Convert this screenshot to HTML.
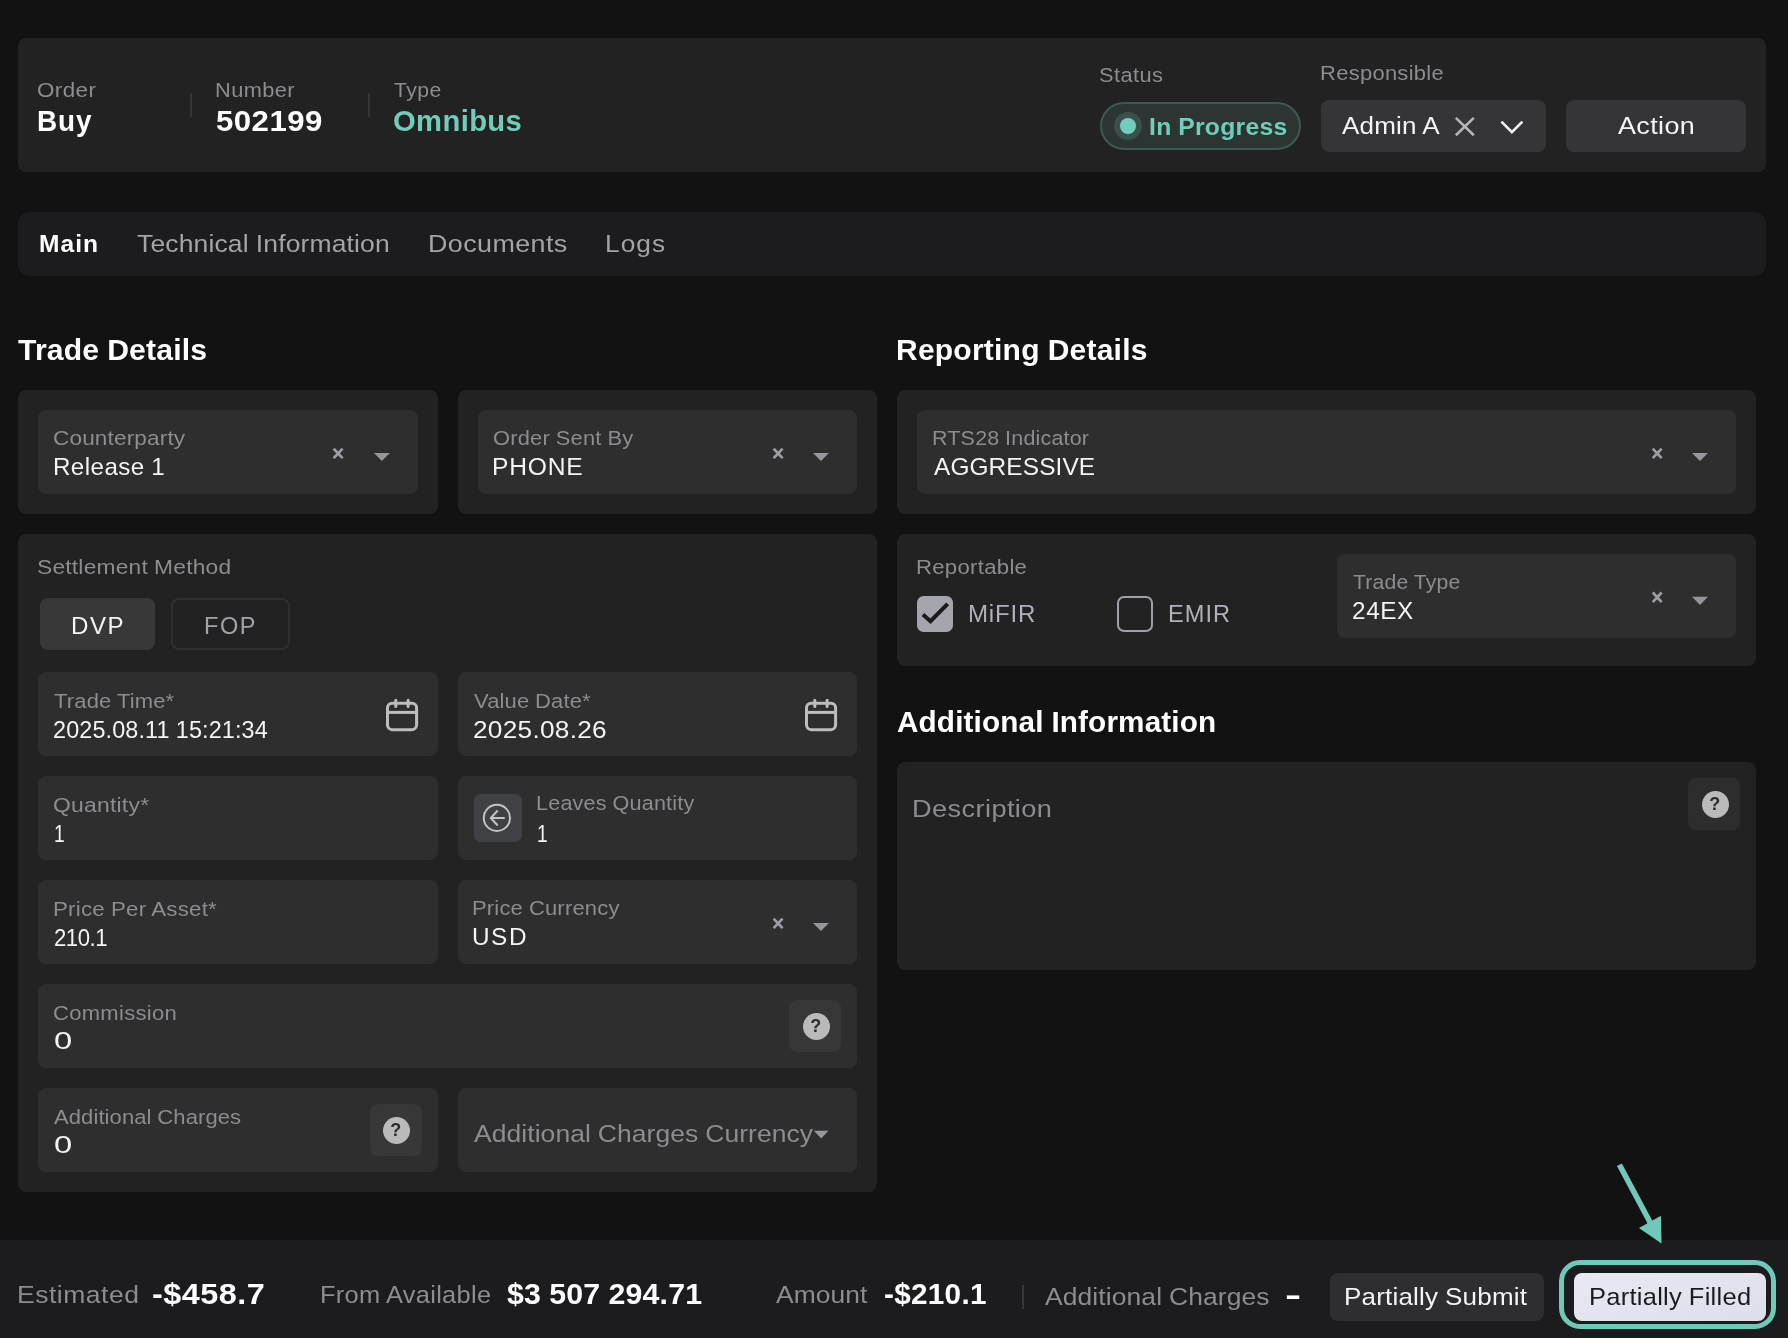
<!DOCTYPE html><html lang="en"><head><meta charset="utf-8"><title>Order 502199</title><style>
html,body{margin:0;padding:0;background:#121212}
body{width:1788px;height:1338px;position:relative;overflow:hidden;font-family:"Liberation Sans",sans-serif}
.b{position:absolute;box-sizing:border-box}
.c{background:#222222;border-radius:8px}
.f{background:#2e2e2e;border-radius:8px}
.tl{position:absolute;left:0;top:0;width:1788px;height:1338px;will-change:transform}
.t{position:absolute;white-space:pre;line-height:1;word-spacing:-0.02em;transform-origin:0 50%}
svg{position:absolute;overflow:visible}

</style></head><body>
<div class="b c" style="left:18px;top:38px;width:1748px;height:134px;"></div>
<div class="b " style="left:18px;top:212px;width:1748px;height:64px;background:#1c1c1e;border-radius:12px"></div>
<div class="b c" style="left:18px;top:390px;width:420px;height:124px;"></div>
<div class="b c" style="left:458px;top:390px;width:419px;height:124px;"></div>
<div class="b c" style="left:897px;top:390px;width:859px;height:124px;"></div>
<div class="b c" style="left:18px;top:534px;width:859px;height:658px;"></div>
<div class="b c" style="left:897px;top:534px;width:859px;height:132px;"></div>
<div class="b c" style="left:897px;top:762px;width:859px;height:207.5px;"></div>
<div class="b " style="left:0px;top:1240px;width:1788px;height:98px;background:#1c1c1e"></div>
<div class="b f" style="left:38px;top:410px;width:380px;height:84px;"></div>
<div class="b f" style="left:478px;top:410px;width:379px;height:84px;"></div>
<div class="b f" style="left:917px;top:410px;width:819px;height:84px;"></div>
<div class="b f" style="left:1337px;top:554px;width:399px;height:84px;"></div>
<div class="b f" style="left:38px;top:672px;width:400px;height:84px;"></div>
<div class="b f" style="left:458px;top:672px;width:399px;height:84px;"></div>
<div class="b f" style="left:38px;top:776px;width:400px;height:84px;"></div>
<div class="b f" style="left:458px;top:776px;width:399px;height:84px;"></div>
<div class="b f" style="left:38px;top:880px;width:400px;height:84px;"></div>
<div class="b f" style="left:458px;top:880px;width:399px;height:84px;"></div>
<div class="b f" style="left:38px;top:984px;width:819px;height:84px;"></div>
<div class="b f" style="left:38px;top:1088px;width:400px;height:84px;"></div>
<div class="b f" style="left:458px;top:1088px;width:399px;height:84px;"></div>
<div class="b " style="left:190px;top:93px;width:2px;height:24px;background:#343437"></div>
<div class="b " style="left:368px;top:93px;width:2px;height:24px;background:#343437"></div>
<div class="b " style="left:1022px;top:1285px;width:1.5px;height:23.5px;background:#38383b"></div>
<div class="b " style="left:1100px;top:102px;width:201px;height:48px;background:#2c3533;border:2px solid #3b5a54;border-radius:24px"></div>
<div class="b " style="left:1114px;top:112px;width:28px;height:28px;background:#3b4f4b;border-radius:50%"></div>
<div class="b " style="left:1119.9px;top:117.9px;width:16.2px;height:16.2px;background:#73cdbb;border-radius:50%"></div>
<div class="b " style="left:1321px;top:100px;width:225px;height:52px;background:#353538;border-radius:8px"></div>
<div class="b " style="left:1566px;top:100px;width:180px;height:52px;background:#353538;border-radius:8px"></div>
<div class="b " style="left:40px;top:598px;width:115px;height:52px;background:#383838;border-radius:8px"></div>
<div class="b " style="left:171px;top:598px;width:119px;height:52px;border:2px solid #2f2f31;border-radius:8px"></div>
<div class="b " style="left:474px;top:794px;width:48px;height:48px;background:#404144;border-radius:7px"></div>
<div class="b " style="left:789px;top:1000px;width:52px;height:52px;background:#373737;border-radius:8px"></div>
<div class="b " style="left:802.65px;top:1012.5px;width:27px;height:27px;background:#bababa;border-radius:50%"></div>
<div class="b " style="left:370px;top:1104px;width:52px;height:52px;background:#373737;border-radius:8px"></div>
<div class="b " style="left:382.5px;top:1116.6px;width:27px;height:27px;background:#bababa;border-radius:50%"></div>
<div class="b " style="left:1688px;top:778px;width:52px;height:52px;background:#2d2d2d;border-radius:8px"></div>
<div class="b " style="left:1701.6px;top:790.55px;width:27px;height:27px;background:#bababa;border-radius:50%"></div>
<div class="b " style="left:917px;top:596px;width:36px;height:36px;background:#a4a5ad;border-radius:6.5px"></div>
<svg style="left:917px;top:596px" width="36" height="36" viewBox="0 0 36 36"><path d="M5.9 18.5 L13.5 25.2 L30.7 7.9" fill="none" stroke="#1b1b1d" stroke-width="4" stroke-linejoin="miter"/></svg>
<div class="b " style="left:1117px;top:596px;width:36px;height:36px;border:2px solid #a0a0a8;border-radius:7px"></div>
<div class="b " style="left:1330px;top:1273px;width:214px;height:48.3px;background:#2e2e31;border-radius:8px"></div>
<div class="b " style="left:1573.8px;top:1273px;width:192.4px;height:48.3px;background:linear-gradient(160deg,#e9e9f3,#dedeea);border-radius:8px"></div>
<div class="b " style="left:1559.3px;top:1260px;width:216.7px;height:69.2px;border:5.5px solid #70c9b8;border-radius:21px"></div>
<svg style="left:0;top:0" width="1788" height="1338" viewBox="0 0 1788 1338"><path d="M1619.4 1164.7 L1651 1224" stroke="#70c9b8" stroke-width="5.6" fill="none"/><path d="M1661.5 1243.6 L1638.9 1228 L1661 1215.8 Z" fill="#70c9b8"/></svg>
<svg style="left:0;top:0" width="1" height="1"><path d="M333.65 448.55 L342.55 458.15 M342.55 448.55 L333.65 458.15" stroke="#9d9da4" stroke-width="2.7" fill="none"/></svg>
<svg style="left:0;top:0" width="1" height="1"><path d="M373.95 452.9 L389.84999999999997 452.9 L381.9 461.0 Z" fill="#96969c"/></svg>
<svg style="left:0;top:0" width="1" height="1"><path d="M773.65 448.55 L782.55 458.15 M782.55 448.55 L773.65 458.15" stroke="#9d9da4" stroke-width="2.7" fill="none"/></svg>
<svg style="left:0;top:0" width="1" height="1"><path d="M813.0 452.9 L828.9000000000001 452.9 L820.95 461.0 Z" fill="#96969c"/></svg>
<svg style="left:0;top:0" width="1" height="1"><path d="M1652.75 448.55 L1661.65 458.15 M1661.65 448.55 L1652.75 458.15" stroke="#9d9da4" stroke-width="2.7" fill="none"/></svg>
<svg style="left:0;top:0" width="1" height="1"><path d="M1692.05 452.9 L1707.95 452.9 L1700 461.0 Z" fill="#96969c"/></svg>
<svg style="left:0;top:0" width="1" height="1"><path d="M1652.75 592.50 L1661.65 602.10 M1661.65 592.50 L1652.75 602.10" stroke="#9d9da4" stroke-width="2.7" fill="none"/></svg>
<svg style="left:0;top:0" width="1" height="1"><path d="M1692.05 596.8 L1707.95 596.8 L1700 604.9 Z" fill="#96969c"/></svg>
<svg style="left:0;top:0" width="1" height="1"><path d="M773.65 918.55 L782.55 928.15 M782.55 918.55 L773.65 928.15" stroke="#9d9da4" stroke-width="2.7" fill="none"/></svg>
<svg style="left:0;top:0" width="1" height="1"><path d="M813.0 922.9 L828.9000000000001 922.9 L820.95 931.0 Z" fill="#96969c"/></svg>
<svg style="left:0;top:0" width="1" height="1"><path d="M813.9000000000001 1130.8 L828.5 1130.8 L821.2 1138.3999999999999 Z" fill="#96969c"/></svg>
<svg style="left:0;top:0" width="1" height="1"><path d="M1455.8 117.9 L1473.8 135.3 M1473.8 117.9 L1455.8 135.3" stroke="#b4b4b4" stroke-width="2.6" fill="none"/><path d="M1501.4 121.6 L1511.9 132.2 L1522.4 121.6" stroke="#f0f0f0" stroke-width="2.7" fill="none"/></svg>
<svg style="left:386px;top:698px" width="33" height="33" viewBox="0 0 33 33" fill="none" stroke="#bdbdbd" stroke-width="3"><rect x="1.5" y="5.15" width="29.1" height="26.5" rx="4.6"/><path d="M1.5 14.4 H30.6"/><path d="M9.8 2.3 V8.5 M22.1 2.3 V8.5" stroke-linecap="round"/></svg>
<svg style="left:804.9px;top:698px" width="33" height="33" viewBox="0 0 33 33" fill="none" stroke="#bdbdbd" stroke-width="3"><rect x="1.5" y="5.15" width="29.1" height="26.5" rx="4.6"/><path d="M1.5 14.4 H30.6"/><path d="M9.8 2.3 V8.5 M22.1 2.3 V8.5" stroke-linecap="round"/></svg>
<svg style="left:474px;top:794px" width="48" height="48" viewBox="0 0 48 48" fill="none" stroke="#c3c3c3" stroke-width="2" stroke-linejoin="miter"><circle cx="22.9" cy="23.9" r="13.1"/><path d="M30.7 24 H17 M23.7 16.5 L16.8 24 L23.7 31.5"/></svg>
<div class="tl">
<span class="t" style="left:810.35px;top:1016.75px;font-size:18px;font-weight:700;color:#2c2c2c">?</span>
<span class="t" style="left:390.20px;top:1120.85px;font-size:18px;font-weight:700;color:#2c2c2c">?</span>
<span class="t" style="left:1709.30px;top:794.80px;font-size:18px;font-weight:700;color:#2c2c2c">?</span>
<span class="t" id="order" style="left:36.99px;top:80.15px;font-size:20.50px;font-weight:400;color:#8c8c91;letter-spacing:0.355px;transform:scaleX(1.0934)">Order</span>
<span class="t" id="buy" style="left:36.55px;top:107.41px;font-size:28.70px;font-weight:700;color:#ffffff;letter-spacing:0.917px;transform:scaleX(0.9723)">Buy</span>
<span class="t" id="number" style="left:215.33px;top:80.15px;font-size:20.50px;font-weight:400;color:#8c8c91;letter-spacing:0.389px;transform:scaleX(1.0628)">Number</span>
<span class="t" id="num" style="left:215.76px;top:107.41px;font-size:28.70px;font-weight:700;color:#ffffff;letter-spacing:0.429px;transform:scaleX(1.0863)">502199</span>
<span class="t" id="type" style="left:393.93px;top:80.15px;font-size:20.50px;font-weight:400;color:#8c8c91;letter-spacing:0.478px;transform:scaleX(1.0325)">Type</span>
<span class="t" id="omni" style="left:392.79px;top:107.41px;font-size:28.70px;font-weight:700;color:#6fcdb9;letter-spacing:0.378px;transform:scaleX(1.0175)">Omnibus</span>
<span class="t" id="status" style="left:1099.32px;top:65.05px;font-size:20.50px;font-weight:400;color:#8c8c91;letter-spacing:0.410px;transform:scaleX(1.0632)">Status</span>
<span class="t" id="inprog" style="left:1149.05px;top:115.18px;font-size:24.60px;font-weight:700;color:#6fcdb9;letter-spacing:0.294px;transform:scaleX(1.0035)">In Progress</span>
<span class="t" id="resp" style="left:1320.32px;top:63.05px;font-size:20.50px;font-weight:400;color:#8c8c91;letter-spacing:0.267px;transform:scaleX(1.0707)">Responsible</span>
<span class="t" id="admin" style="left:1341.64px;top:114.08px;font-size:24.60px;font-weight:400;color:#f4f4f4;letter-spacing:0.167px;transform:scaleX(1.0590)">Admin A</span>
<span class="t" id="action" style="left:1617.98px;top:114.08px;font-size:24.60px;font-weight:400;color:#f4f4f4;letter-spacing:0.335px;transform:scaleX(1.0957)">Action</span>
<span class="t" id="main" style="left:39.21px;top:232.18px;font-size:24.60px;font-weight:700;color:#ffffff;letter-spacing:1.043px;transform:scaleX(0.9977)">Main</span>
<span class="t" id="tech" style="left:137.43px;top:232.18px;font-size:24.60px;font-weight:400;color:#a3a3aa;letter-spacing:0.134px;transform:scaleX(1.0774)">Technical Information</span>
<span class="t" id="docs" style="left:428.43px;top:232.18px;font-size:24.60px;font-weight:400;color:#a3a3aa;letter-spacing:0.374px;transform:scaleX(1.0933)">Documents</span>
<span class="t" id="logs" style="left:605.46px;top:232.18px;font-size:24.60px;font-weight:400;color:#a3a3aa;letter-spacing:0.994px;transform:scaleX(1.0685)">Logs</span>
<span class="t" id="h_trade" style="left:17.82px;top:336.11px;font-size:28.70px;font-weight:700;color:#ffffff;letter-spacing:0.163px;transform:scaleX(1.0504)">Trade Details</span>
<span class="t" id="h_rep" style="left:896.04px;top:336.11px;font-size:28.70px;font-weight:700;color:#ffffff;letter-spacing:0.220px;transform:scaleX(1.0455)">Reporting Details</span>
<span class="t" id="h_add" style="left:896.67px;top:707.91px;font-size:28.70px;font-weight:700;color:#ffffff;letter-spacing:0.139px;transform:scaleX(1.0351)">Additional Information</span>
<span class="t" id="l_cp" style="left:53.28px;top:427.75px;font-size:20.50px;font-weight:400;color:#8c8c91;letter-spacing:0.125px;transform:scaleX(1.1020)">Counterparty</span>
<span class="t" id="v_cp" style="left:53.19px;top:455.48px;font-size:24.60px;font-weight:400;color:#f4f4f4;letter-spacing:0.432px;transform:scaleX(0.9824)">Release 1</span>
<span class="t" id="l_osb" style="left:492.52px;top:427.75px;font-size:20.50px;font-weight:400;color:#8c8c91;letter-spacing:0.172px;transform:scaleX(1.0694)">Order Sent By</span>
<span class="t" id="v_osb" style="left:492.36px;top:455.48px;font-size:24.60px;font-weight:400;color:#f4f4f4;letter-spacing:0.772px;transform:scaleX(1.0015)">PHONE</span>
<span class="t" id="l_rts" style="left:932.03px;top:427.75px;font-size:20.50px;font-weight:400;color:#8c8c91;letter-spacing:0.172px;transform:scaleX(1.0483)">RTS28 Indicator</span>
<span class="t" id="v_rts" style="left:933.67px;top:455.48px;font-size:24.60px;font-weight:400;color:#f4f4f4;letter-spacing:0.124px;transform:scaleX(0.9921)">AGGRESSIVE</span>
<span class="t" id="l_sm" style="left:37.17px;top:556.65px;font-size:20.50px;font-weight:400;color:#8c8c91;letter-spacing:0.198px;transform:scaleX(1.1105)">Settlement Method</span>
<span class="t" id="dvp" style="left:71.49px;top:614.38px;font-size:24.60px;font-weight:400;color:#f4f4f4;letter-spacing:1.494px;transform:scaleX(0.9807)">DVP</span>
<span class="t" id="fop" style="left:204.33px;top:614.38px;font-size:24.60px;font-weight:400;color:#a3a3aa;letter-spacing:1.623px;transform:scaleX(0.9572)">FOP</span>
<span class="t" id="l_rep" style="left:916.15px;top:556.75px;font-size:20.50px;font-weight:400;color:#8c8c91;letter-spacing:0.279px;transform:scaleX(1.0788)">Reportable</span>
<span class="t" id="mifir" style="left:968.24px;top:602.18px;font-size:24.60px;font-weight:400;color:#b0b0ba;letter-spacing:0.791px;transform:scaleX(0.9790)">MiFIR</span>
<span class="t" id="emir" style="left:1168.30px;top:602.18px;font-size:24.60px;font-weight:400;color:#b0b0ba;letter-spacing:1.097px;transform:scaleX(0.9580)">EMIR</span>
<span class="t" id="l_tt" style="left:1352.80px;top:571.85px;font-size:20.50px;font-weight:400;color:#8c8c91;letter-spacing:0.179px;transform:scaleX(1.0345)">Trade Type</span>
<span class="t" id="v_tt" style="left:1351.58px;top:599.18px;font-size:24.60px;font-weight:400;color:#f4f4f4;letter-spacing:0.614px;transform:scaleX(0.9888)">24EX</span>
<span class="t" id="l_time" style="left:54.08px;top:690.55px;font-size:20.50px;font-weight:400;color:#8c8c91;letter-spacing:0.148px;transform:scaleX(1.0731)">Trade Time*</span>
<span class="t" id="v_time" style="left:53.23px;top:718.18px;font-size:24.60px;font-weight:400;color:#f4f4f4;letter-spacing:0.133px;transform:scaleX(0.9511)">2025.08.11 15:21:34</span>
<span class="t" id="l_vd" style="left:473.53px;top:690.55px;font-size:20.50px;font-weight:400;color:#8c8c91;letter-spacing:0.124px;transform:scaleX(1.0724)">Value Date*</span>
<span class="t" id="v_vd" style="left:472.66px;top:718.18px;font-size:24.60px;font-weight:400;color:#f4f4f4;letter-spacing:0.243px;transform:scaleX(1.0667)">2025.08.26</span>
<span class="t" id="l_q" style="left:53.31px;top:794.95px;font-size:20.50px;font-weight:400;color:#8c8c91;letter-spacing:0.208px;transform:scaleX(1.1171)">Quantity*</span>
<span class="t" id="v_q" style="left:53.65px;top:821.78px;font-size:24.60px;font-weight:400;color:#f4f4f4;letter-spacing:0.000px;transform:scaleX(0.7800)">1</span>
<span class="t" id="l_lq" style="left:536.34px;top:793.05px;font-size:20.50px;font-weight:400;color:#8c8c91;letter-spacing:0.162px;transform:scaleX(1.0550)">Leaves Quantity</span>
<span class="t" id="v_lq" style="left:536.88px;top:821.78px;font-size:24.60px;font-weight:400;color:#f4f4f4;letter-spacing:0.000px;transform:scaleX(0.7800)">1</span>
<span class="t" id="l_ppa" style="left:53.29px;top:898.55px;font-size:20.50px;font-weight:400;color:#8c8c91;letter-spacing:0.212px;transform:scaleX(1.0883)">Price Per Asset*</span>
<span class="t" id="v_ppa" style="left:53.79px;top:926.18px;font-size:24.60px;font-weight:400;color:#f4f4f4;letter-spacing:-0.502px;transform:scaleX(0.9000)">210.1</span>
<span class="t" id="l_pc" style="left:472.28px;top:898.05px;font-size:20.50px;font-weight:400;color:#8c8c91;letter-spacing:0.182px;transform:scaleX(1.0718)">Price Currency</span>
<span class="t" id="v_pc" style="left:472.39px;top:925.18px;font-size:24.60px;font-weight:400;color:#f4f4f4;letter-spacing:1.551px;transform:scaleX(0.9897)">USD</span>
<span class="t" id="l_com" style="left:53.31px;top:1002.95px;font-size:20.50px;font-weight:400;color:#8c8c91;letter-spacing:0.271px;transform:scaleX(1.0738)">Commission</span>
<span class="t" id="v_com" style="left:53.77px;top:1028.58px;font-size:24.60px;font-weight:400;color:#f4f4f4;letter-spacing:0.000px;transform:scaleX(1.3300)">0</span>
<span class="t" id="l_ac" style="left:54.21px;top:1106.85px;font-size:20.50px;font-weight:400;color:#8c8c91;letter-spacing:0.084px;transform:scaleX(1.0737)">Additional Charges</span>
<span class="t" id="v_ac" style="left:53.77px;top:1132.68px;font-size:24.60px;font-weight:400;color:#f4f4f4;letter-spacing:0.000px;transform:scaleX(1.3300)">0</span>
<span class="t" id="p_acc" style="left:473.91px;top:1121.68px;font-size:24.60px;font-weight:400;color:#8c8c91;letter-spacing:0.051px;transform:scaleX(1.0772)">Additional Charges Currency</span>
<span class="t" id="desc" style="left:912.16px;top:797.28px;font-size:24.60px;font-weight:400;color:#8c8c91;letter-spacing:0.365px;transform:scaleX(1.1046)">Description</span>
<span class="t" id="f_est" style="left:17.25px;top:1282.78px;font-size:24.60px;font-weight:400;color:#8c8c91;letter-spacing:0.466px;transform:scaleX(1.0781)">Estimated</span>
<span class="t" id="f_estv" style="left:152.49px;top:1280.21px;font-size:28.70px;font-weight:700;color:#ffffff;letter-spacing:0.400px;transform:scaleX(1.1300)">-$458.7</span>
<span class="t" id="f_fa" style="left:320.31px;top:1282.78px;font-size:24.60px;font-weight:400;color:#8c8c91;letter-spacing:0.280px;transform:scaleX(1.0344)">From Available</span>
<span class="t" id="f_fav" style="left:506.78px;top:1280.21px;font-size:28.70px;font-weight:700;color:#ffffff;letter-spacing:0.201px;transform:scaleX(1.0563)">$3 507 294.71</span>
<span class="t" id="f_am" style="left:775.82px;top:1282.78px;font-size:24.60px;font-weight:400;color:#8c8c91;letter-spacing:0.088px;transform:scaleX(1.0735)">Amount</span>
<span class="t" id="f_amv" style="left:883.69px;top:1280.21px;font-size:28.70px;font-weight:700;color:#ffffff;letter-spacing:0.287px;transform:scaleX(1.0350)">-$210.1</span>
<span class="t" id="f_ac" style="left:1044.62px;top:1285.38px;font-size:24.60px;font-weight:400;color:#8c8c91;letter-spacing:0.091px;transform:scaleX(1.0750)">Additional Charges</span>
<span class="t" id="f_acv" style="left:1285.48px;top:1280.81px;font-size:28.70px;font-weight:700;color:#ffffff;letter-spacing:0.000px;transform:scaleX(1.6900)">-</span>
<span class="t" id="b_ps" style="left:1344.11px;top:1284.68px;font-size:24.60px;font-weight:400;color:#f4f4f4;letter-spacing:0.177px;transform:scaleX(1.0576)">Partially Submit</span>
<span class="t" id="b_pf" style="left:1588.55px;top:1284.68px;font-size:24.60px;font-weight:400;color:#1b1b1f;letter-spacing:0.255px;transform:scaleX(1.0361)">Partially Filled</span>
</div>
</body></html>
